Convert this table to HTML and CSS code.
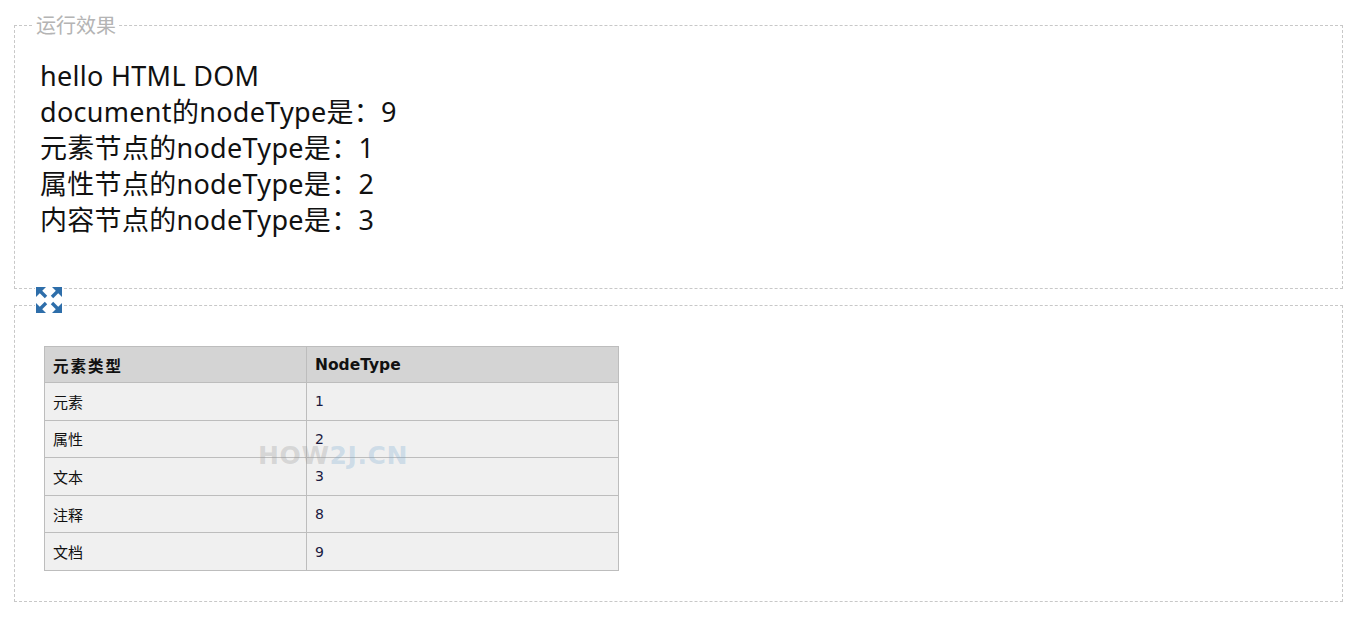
FILE: index.html
```html
<!DOCTYPE html>
<html lang="zh-CN">
<head>
<meta charset="utf-8">
<title>运行效果</title>
<link rel="stylesheet" href="styles.css">
</head>
<body>
<div class="page">
  <fieldset class="result">
    <legend class="result-legend">运行效果</legend>
    <div class="output">
      <div>hello HTML DOM</div>
      <div>document的nodeType是：9</div>
      <div>元素节点的nodeType是：1</div>
      <div>属性节点的nodeType是：2</div>
      <div>内容节点的nodeType是：3</div>
    </div>
  </fieldset>
  <div class="panel">
    <span class="expand-icon">
      <svg width="28" height="28" viewBox="0 0 28 28">
        <g fill="#2e6eaa" stroke="#2e6eaa">
          <polygon points="1,1 11,1 1,11" stroke="none"/>
          <line x1="4" y1="4" x2="11" y2="11" stroke-width="3.4"/>
          <polygon points="27,1 17,1 27,11" stroke="none"/>
          <line x1="24" y1="4" x2="17" y2="11" stroke-width="3.4"/>
          <polygon points="1,27 11,27 1,17" stroke="none"/>
          <line x1="4" y1="24" x2="11" y2="17" stroke-width="3.4"/>
          <polygon points="27,27 17,27 27,17" stroke="none"/>
          <line x1="24" y1="24" x2="17" y2="17" stroke-width="3.4"/>
        </g>
      </svg>
    </span>
    <div class="table-wrap">
      <table class="types">
        <thead>
          <tr><th class="col-name">元素类型</th><th>NodeType</th></tr>
        </thead>
        <tbody>
          <tr><td>元素</td><td class="num">1</td></tr>
          <tr><td>属性</td><td class="num">2</td></tr>
          <tr><td>文本</td><td class="num">3</td></tr>
          <tr><td>注释</td><td class="num">8</td></tr>
          <tr><td>文档</td><td class="num">9</td></tr>
        </tbody>
      </table>
      <div class="watermark"><span class="wm-gray">HOW</span><span class="wm-blue">2J.CN</span></div>
    </div>
  </div>
</div>
</body>
</html>
```

FILE: styles.css
```css
html, body {
  margin: 0;
  padding: 0;
  background: #fff;
}
.page {
  padding: 14px 13px 0 14px;
  font-family: "Noto Sans", "Noto Sans CJK SC", sans-serif;
}
.result {
  margin: 0;
  padding: 0 25px 50px 25px;
  border: 1px dashed #c8c8c8;
  min-width: 0;
}
.result-legend {
  margin-left: -7px;
  padding: 0 3px;
  font-family: "Noto Sans CJK SC", sans-serif;
  font-size: 20px;
  line-height: 22px;
  color: #b4b4b4;
}
.output {
  padding-top: 22px;
  font-size: 27px;
  letter-spacing: 0.3px;
  line-height: 36px;
  color: #111;
}
.panel {
  position: relative;
  margin-top: 16px;
  border: 1px dashed #c8c8c8;
  padding: 40px 29px 30px 29px;
}
.expand-icon {
  position: absolute;
  left: 20px;
  top: -20px;
  width: 28px;
  height: 28px;
  background: #fff;
  display: block;
}
.expand-icon svg { display: block; }
.table-wrap {
  position: relative;
  width: 575px;
}
.types {
  border-collapse: collapse;
  width: 575px;
  font-family: "DejaVu Sans", "Noto Sans CJK SC", sans-serif;
  font-size: 15px;
  color: #111;
}
.types th, .types td {
  border: 1px solid #bdbdbd;
  text-align: left;
  padding: 0 8px;
}
.types th {
  background: #d4d4d4;
  height: 35px;
  font-weight: bold;
  font-size: 15.5px;
}
.types th.col-name {
  width: 245px;
  letter-spacing: 2px;
}
.types td {
  background: #f0f0f0;
  height: 36.6px;
}
.types td.num {
  color: #1a1a40;
  font-size: 14px;
}
.watermark {
  position: absolute;
  left: 214px;
  top: 95px;
  font-family: "DejaVu Sans", sans-serif;
  font-weight: bold;
  font-size: 25px;
  letter-spacing: 0.6px;
  pointer-events: none;
}
.wm-gray { color: rgba(150, 150, 150, 0.3); }
.wm-blue { color: rgba(120, 170, 210, 0.3); }
```
